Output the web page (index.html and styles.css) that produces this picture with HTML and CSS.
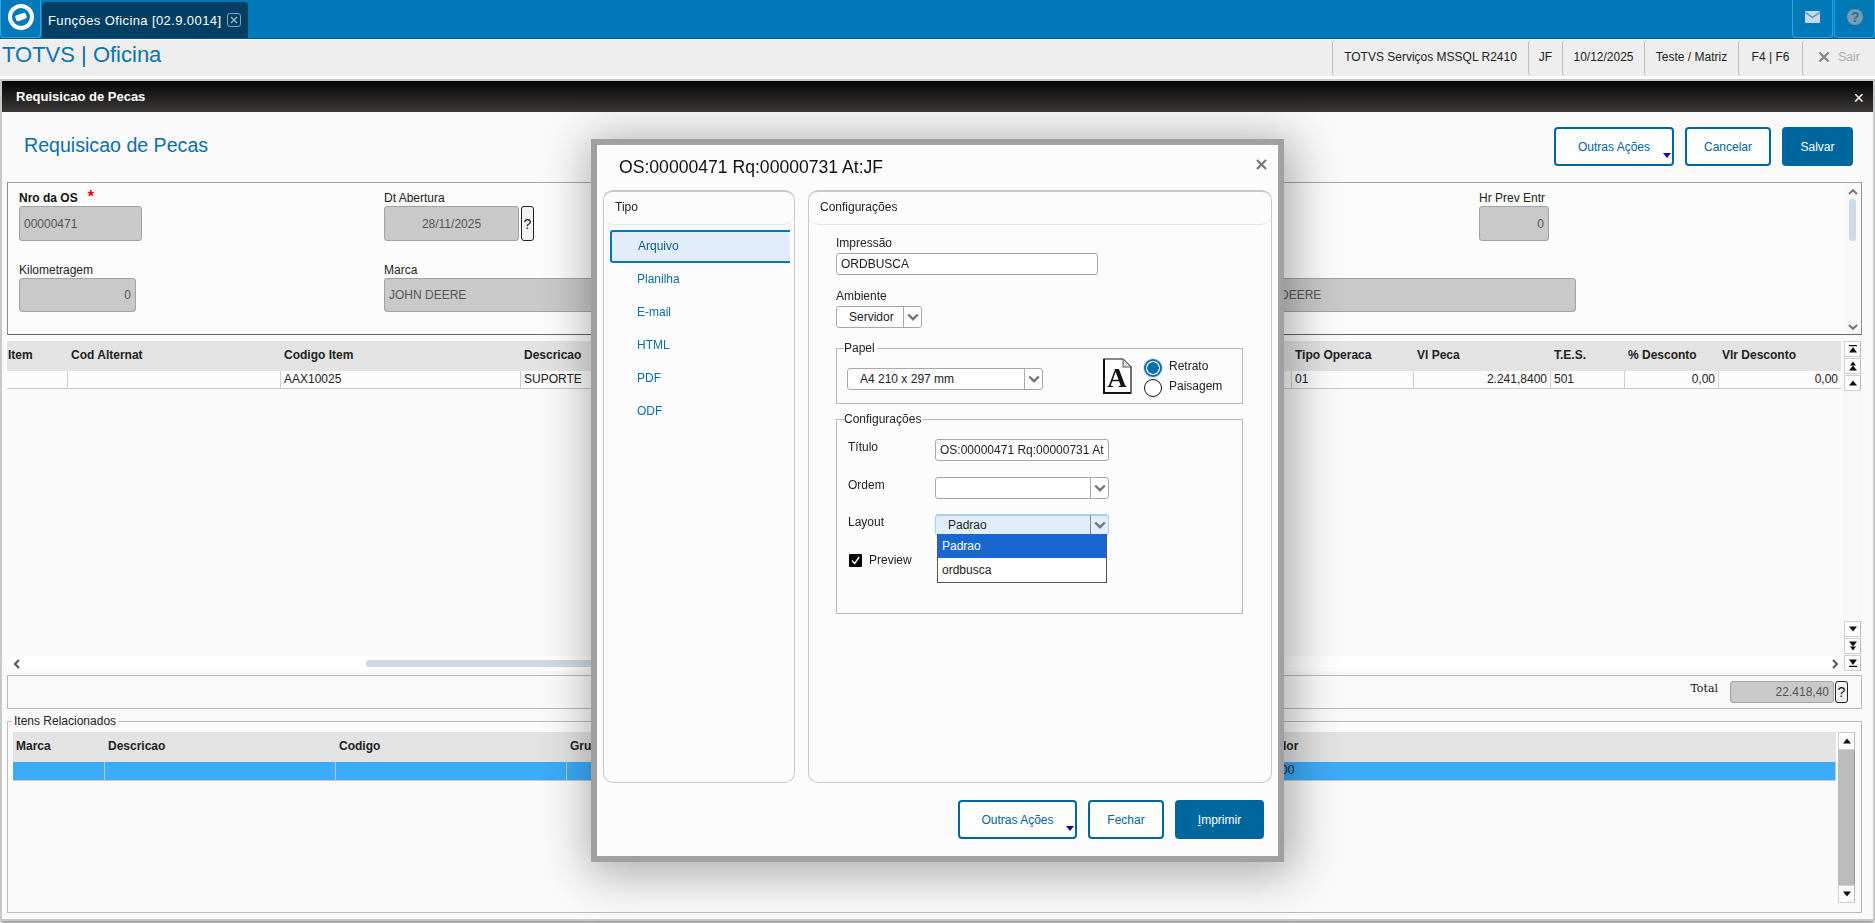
FILE: index.html
```html
<!DOCTYPE html>
<html lang="pt-BR">
<head>
<meta charset="utf-8">
<title>TOTVS | Oficina</title>
<link rel="stylesheet" href="styles.css">
</head>
<body>
<svg class="defs" width="0" height="0" aria-hidden="true">
  <symbol id="chev" viewBox="0 0 12 8"><path d="M1.2 1.5 6 6.2l4.8-4.7" fill="none" stroke="#777" stroke-width="2.4"/></symbol>
  <symbol id="up" viewBox="0 0 10 10"><path d="M5 2.5 9 7.5H1z" fill="#111"/></symbol>
  <symbol id="down" viewBox="0 0 10 10"><path d="M5 7.5 1 2.5h8z" fill="#111"/></symbol>
  <symbol id="upfast" viewBox="0 0 10 10"><path d="M5 0.5 8 4.5H2zM5 4.5 9 9.5H1z" fill="#111"/></symbol>
  <symbol id="downfast" viewBox="0 0 10 10"><path d="M5 9.5 2 5.5h6zM5 5.5 1 .5h8z" fill="#111"/></symbol>
  <symbol id="top" viewBox="0 0 10 10"><path d="M1 1h8v1.2H1zM5 3 9 8.5H1z" fill="#111"/></symbol>
  <symbol id="bottom" viewBox="0 0 10 10"><path d="M1 7.8h8V9H1zM5 7 1 1.5h8z" fill="#111"/></symbol>
</svg>

<header class="topbar">
  <div class="tile logo-tile">
    <svg width="28" height="28" viewBox="0 0 28 28"><circle cx="14" cy="14" r="11" fill="none" stroke="#fff" stroke-width="4"/><rect x="8.500" y="11" width="11" height="6" rx="1.500" fill="#fff" transform="rotate(-20 14 14)"/></svg>
  </div>
  <div class="tab">
    <span>Funções Oficina [02.9.0014]</span>
    <svg class="tab-close" width="14" height="14" viewBox="0 0 14 14"><rect x=".5" y=".5" width="13" height="13" rx="2.500" fill="none" stroke="#8aa3b5"/><path d="M4 4l6 6M10 4l-6 6" stroke="#9db4c4" stroke-width="1.400"/></svg>
  </div>
  <div class="spacer"></div>
  <div class="tile">
    <svg width="15" height="12" viewBox="0 0 15 12"><rect width="15" height="12" rx="1" fill="#c5d9e6"/><path d="M.5 1.500 7.500 6.500l7-5" fill="none" stroke="#3f8fc0" stroke-width="1.300"/></svg>
  </div>
  <div class="tile">
    <svg width="16" height="16" viewBox="0 0 16 16"><circle cx="8" cy="8" r="8" fill="#7f9aab"/><text x="8" y="12.500" text-anchor="middle" class="help-mark">?</text></svg>
  </div>
</header>

<div class="statusbar">
  <div class="brand">TOTVS | Oficina</div>
  <div class="cell c1">TOTVS Serviços MSSQL R2410</div>
  <div class="cell c2">JF</div>
  <div class="cell c3">10/12/2025</div>
  <div class="cell c4">Teste / Matriz</div>
  <div class="cell c5">F4 | F6</div>
  <div class="cell c6 sair">
    <svg width="12" height="12" viewBox="0 0 12 12"><path d="M1.500 1.500l9 9M10.500 1.500l-9 9" stroke="#888" stroke-width="2.400"/></svg>
    <span>Sair</span>
  </div>
</div>

<main class="window">
  <div class="win-title"><span>Requisicao de Pecas</span><span class="win-x">×</span></div>
  <div class="win-body">
    <div class="page-head">
      <h2 class="page-title">Requisicao de Pecas</h2>
      <div class="actions">
        <button class="btn w-more"><span>Outras Ações</span><i class="caret"></i></button>
        <button class="btn w-cancel">Cancelar</button>
        <button class="btn primary w-save">Salvar</button>
      </div>
    </div>

    <section class="form-panel">
      <div class="form-grid">
        <div class="field f-os">
          <label class="lbl strong">Nro da OS<b class="req">*</b></label>
          <div class="input w-os">00000471</div>
        </div>
        <div class="field f-dt">
          <label class="lbl">Dt Abertura</label>
          <div class="with-help"><div class="input center w-dt">28/11/2025</div><div class="help">?</div></div>
        </div>
        <div class="field f-hr">
          <label class="lbl">Hr Prev Entr</label>
          <div class="input right w-hr">0</div>
        </div>
        <div class="field f-km">
          <label class="lbl">Kilometragem</label>
          <div class="input right w-km">0</div>
        </div>
        <div class="field f-marca">
          <label class="lbl">Marca</label>
          <div class="input w-marca">JOHN DEERE</div>
        </div>
        <div class="field f-marca2">
          <label class="lbl">&nbsp;</label>
          <div class="input w-marca2">JOHN DEERE</div>
        </div>
      </div>
      <div class="vscroll">
        <svg class="sa" width="10" height="8"><use href="#chev" transform="rotate(180 5 4)"/></svg>
        <div class="vthumb"></div>
        <div class="spacer"></div>
        <svg class="sa" width="10" height="8"><use href="#chev"/></svg>
      </div>
    </section>

    <section class="grid-area">
      <div class="grid-main">
        <div class="tbl top-cols head">
          <div>Item</div><div>Cod Alternat</div><div>Codigo Item</div><div>Descricao</div><div>Tipo Operaca</div><div>Vl Peca</div><div>T.E.S.</div><div>% Desconto</div><div>Vlr Desconto</div>
        </div>
        <div class="tbl top-cols row">
          <div></div><div></div><div>AAX10025</div><div>SUPORTE</div><div>01</div><div class="r">2.241,8400</div><div>501</div><div class="r">0,00</div><div class="r">0,00</div>
        </div>
        <div class="spacer"></div>
        <div class="hscroll">
          <svg width="8" height="10" viewBox="0 0 8 10"><path d="M6 1 2 5l4 4" fill="none" stroke="#555" stroke-width="2"/></svg>
          <div class="hthumb"></div>
          <svg width="8" height="10" viewBox="0 0 8 10"><path d="M2 1l4 4-4 4" fill="none" stroke="#555" stroke-width="2"/></svg>
        </div>
      </div>
      <div class="side-btns">
        <div class="sb-group">
          <div class="sb"><svg width="10" height="10"><use href="#top"/></svg></div>
          <div class="sb"><svg width="10" height="10"><use href="#upfast"/></svg></div>
          <div class="sb"><svg width="10" height="10"><use href="#up"/></svg></div>
        </div>
        <div class="sb-group">
          <div class="sb"><svg width="10" height="10"><use href="#down"/></svg></div>
          <div class="sb"><svg width="10" height="10"><use href="#downfast"/></svg></div>
          <div class="sb"><svg width="10" height="10"><use href="#bottom"/></svg></div>
        </div>
      </div>
    </section>

    <section class="total-panel">
      <span class="total-lbl">Total</span>
      <div class="with-help tight"><div class="input right w-total">22.418,40</div><div class="help small">?</div></div>
    </section>

    <fieldset class="related">
      <legend>Itens Relacionados</legend>
      <div class="rel-wrap">
        <div class="rel-main">
          <div class="tbl rel-cols head">
            <div>Marca</div><div>Descricao</div><div>Codigo</div><div>Grupo</div><div>Valor</div>
          </div>
          <div class="tbl rel-cols row selected">
            <div></div><div></div><div></div><div></div><div class="val">0,00</div>
          </div>
        </div>
        <div class="rel-scroll">
          <div class="sb tall"><svg width="10" height="10"><use href="#up"/></svg></div>
          <div class="track"></div>
          <div class="sb tall"><svg width="10" height="10"><use href="#down"/></svg></div>
        </div>
      </div>
    </fieldset>
  </div>
</main>

<div class="modal">
  <div class="m-head">
    <div class="m-title">OS:00000471 Rq:00000731 At:JF</div>
    <svg class="m-x" width="11" height="11" viewBox="0 0 11 11"><path d="M1 1l9 9M10 1l-9 9" stroke="#777" stroke-width="2.200"/></svg>
  </div>
  <div class="m-body">
    <div class="m-panel m-left">
      <div class="m-phead">Tipo</div>
      <ul class="m-list">
        <li class="active">Arquivo</li>
        <li>Planilha</li>
        <li>E-mail</li>
        <li>HTML</li>
        <li>PDF</li>
        <li>ODF</li>
      </ul>
    </div>
    <div class="m-panel m-right">
      <div class="m-phead">Configurações</div>
      <div class="m-form">
        <label class="lbl dark">Impressão</label>
        <div class="tinput w-imp">ORDBUSCA</div>
        <label class="lbl dark mt">Ambiente</label>
        <div class="select w-amb"><span class="sv ind">Servidor</span><span class="sarrow"><svg width="12" height="8"><use href="#chev"/></svg></span></div>

        <fieldset class="box papel">
          <legend>Papel</legend>
          <div class="papel-row">
            <div class="select w-a4"><span class="sv ind">A4 210 x 297 mm</span><span class="sarrow"><svg width="12" height="8"><use href="#chev"/></svg></span></div>
            <svg class="docicon" width="29" height="36" viewBox="0 0 29 36"><path d="M1 1h19l8 8v26H1z" fill="#fff" stroke="#111" stroke-width="1.200"/><path d="M1 1v34h27" fill="none" stroke="#111" stroke-width="2"/><path d="M20 1v8h8z" fill="#ddd" stroke="#555"/><text x="14" y="29" text-anchor="middle" class="doc-a">A</text></svg>
            <div class="radios">
              <div class="radio-row"><span class="radio on"></span><span class="radio-text">Retrato</span></div>
              <div class="radio-row"><span class="radio"></span><span class="radio-text">Paisagem</span></div>
            </div>
          </div>
        </fieldset>

        <fieldset class="box config">
          <legend>Configurações</legend>
          <div class="cf-row"><span class="cf-lbl">Título</span><div class="tinput w-tit">OS:00000471 Rq:00000731 At</div></div>
          <div class="cf-row"><span class="cf-lbl">Ordem</span><div class="select w-ord"><span class="sv"></span><span class="sarrow"><svg width="12" height="8"><use href="#chev"/></svg></span></div></div>
          <div class="cf-row layout-row"><span class="cf-lbl">Layout</span>
            <div class="select focus w-lay"><span class="sv ind">Padrao</span><span class="sarrow"><svg width="12" height="8"><use href="#chev"/></svg></span>
              <div class="dropdown"><div class="opt sel">Padrao</div><div class="opt">ordbusca</div></div>
            </div>
          </div>
          <div class="check-row">
            <svg width="13" height="13" viewBox="0 0 13 13"><rect width="13" height="13" rx="1" fill="#000"/><path d="M3 6.500l2.600 3L10.200 3" fill="none" stroke="#fff" stroke-width="1.400"/></svg>
            <span>Preview</span>
          </div>
        </fieldset>
      </div>
    </div>
  </div>
  <div class="m-foot">
    <button class="btn m-more"><span>Outras Ações</span><i class="caret"></i></button>
    <button class="btn m-close">Fechar</button>
    <button class="btn primary m-print"><u>I</u>mprimir</button>
  </div>
</div>
</body>
</html>
```

FILE: styles.css
```css
* { box-sizing: border-box; }
html, body { height: 100%; }
body {
  margin: 0;
  width: 1875px;
  height: 923px;
  overflow: hidden;
  background: #fff;
  font-family: "Liberation Sans", Arial, sans-serif;
  font-size: 12px;
  color: #222;
  display: flex;
  flex-direction: column;
}
.defs { position: absolute; }
.spacer { flex: 1; }

/* top bar */
.topbar {
  height: 39px;
  flex: none;
  background: #0079b8;
  border-bottom: 1px solid #025a8a;
  display: flex;
  align-items: stretch;
}
.tile {
  width: 41px;
  border: 1px solid #2f9fe0;
  border-top: 0;
  border-radius: 0 0 4px 4px;
  display: flex;
  align-items: center;
  justify-content: center;
  margin-right: 1px;
  padding-bottom: 3px;
}
.logo-tile { background: #0079b8; }
.tile:last-child { margin-right: 0; }
.tab {
  width: 206px;
  margin-top: 2px;
  background: #003f63;
  border-radius: 4px 4px 0 0;
  color: #fff;
  font-size: 13px;
  letter-spacing: .4px;
  display: flex;
  align-items: center;
  padding-left: 6px;
  gap: 6px;
}
.help-mark { font: bold 14px "Liberation Sans", Arial, sans-serif; fill: #0079b8; }

/* status bar */
.statusbar {
  height: 36px;
  flex: none;
  background: #eee;
  margin-top: 1px;
  display: flex;
  align-items: stretch;
}
.brand {
  flex: 1;
  font-size: 22px;
  color: #0a74ad;
  padding-left: 2px;
  line-height: 29px;
}
.cell {
  border-left: 1px solid #bdbdbd;
  border-radius: 4px 0 0 4px;
  display: flex;
  align-items: center;
  justify-content: center;
  font-size: 12px;
  color: #222;
  padding-bottom: 3px;
}
.c1 { width: 196px; }
.c2 { width: 34px; }
.c3 { width: 82px; }
.c4 { width: 94px; }
.c5 { width: 64px; }
.c6 { width: 73px; }
.sair { gap: 8px; color: #aaa; }

/* main window */
.window {
  flex: none;
  margin: 5px 2px 0;
  height: 838px;
  display: flex;
  flex-direction: column;
  background: #fafafa;
  box-shadow: 0 0 0 2px #c9c9c9, 0 3px 3px 1px #8e8e8e;
}
.win-title {
  height: 31px;
  flex: none;
  background: linear-gradient(#050505, #3b3a38);
  color: #fff;
  font-weight: bold;
  font-size: 13px;
  padding: 0 9px 0 14px;
  display: flex;
  align-items: center;
  justify-content: space-between;
}
.win-x { font-size: 18px; font-weight: normal; line-height: 1; margin-top: 2px; }
.win-body { flex: 1; padding: 0 11px 0 5px; display: flex; flex-direction: column; }
.page-head {
  height: 70px;
  flex: none;
  display: flex;
  justify-content: space-between;
  align-items: flex-start;
}
.page-title {
  margin: 21px 0 0 17px;
  font-size: 19.6px;
  font-weight: normal;
  color: #0a6ea8;
  line-height: 24px;
}
.actions { display: flex; gap: 11px; margin: 15px 9px 0 0; }

.btn {
  position: relative;
  height: 39px;
  border: 2px solid #00669e;
  border-radius: 4px;
  background: #fdfdfd;
  color: #00669e;
  font: 12px "Liberation Sans", Arial, sans-serif;
  padding: 0;
}
.btn.primary { background: #00669e; color: #fff; }
.btn u { text-decoration: underline; }
.w-more { width: 120px; }
.w-cancel { width: 86px; }
.w-save { width: 71px; }
.caret {
  position: absolute;
  right: 1px;
  bottom: 6px;
  border-left: 4px solid transparent;
  border-right: 4px solid transparent;
  border-top: 5px solid #16089c;
}

/* form panel */
.form-panel {
  height: 153px;
  flex: none;
  border: 1px solid #8d8d8d;
  border-color: #a7a7a7 #8d8d8d #666;
  display: flex;
  background: #fcfcfc;
}
.form-grid {
  flex: 1;
  display: grid;
  grid-template-columns: 365px 1095px 1fr;
  grid-template-rows: 72px 1fr;
  padding: 8px 0 0 11px;
  min-width: 0;
}
.f-hr { grid-column: 3; }
.f-km { grid-row: 2; grid-column: 1; }
.f-marca { grid-row: 2; grid-column: 2; }
.f-marca2 { grid-row: 2; grid-column: 2 / 4; margin-left: 855px; }
.f-dt { grid-column: 2; }
.field { display: flex; flex-direction: column; }
.lbl { display: block; line-height: 14px; height: 15px; color: #222; }
.lbl.strong { font-weight: bold; color: #111; }
.req { color: #e00; font-size: 16px; margin-left: 10px; line-height: 10px; }
.input {
  background: #c9c9c9;
  border: 1px solid #a3a3a3;
  border-radius: 3px;
  color: #555;
  display: flex;
  align-items: center;
  padding: 0 4px;
  height: 35px;
}
.input.right { justify-content: flex-end; }
.input.center { justify-content: center; }
.w-os { width: 123px; }
.w-dt { width: 135px; }
.w-hr { width: 70px; }
.w-km { width: 117px; height: 34px; }
.w-marca { width: 500px; height: 34px; }
.w-marca2 { width: 337px; height: 34px; }
.with-help { display: flex; gap: 2px; }
.with-help.tight { gap: 1px; }
.help {
  width: 13px;
  border: 1px solid #222;
  border-radius: 3px;
  background: #f2f2f2;
  display: flex;
  align-items: center;
  justify-content: center;
  font-size: 14px;
  color: #111;
}
.vscroll {
  width: 15px;
  margin-right: 1px;
  background: #f8f8f8;
  display: flex;
  flex-direction: column;
  align-items: center;
  padding: 5px 0 3px;
}
.vthumb { width: 7px; height: 42px; background: #d0dae4; border-radius: 3px; margin-top: 3px; }

/* grid */
.grid-area { height: 330px; flex: none; margin-top: 6px; display: flex; }
.grid-main { flex: 1; min-width: 0; display: flex; flex-direction: column; }
.tbl { display: grid; flex: none; }
.top-cols { grid-template-columns: 61px 213px 240px 771px 122px 137px 74px 94px 123px; }
.rel-cols { grid-template-columns: 92px 231px 231px 699px 1fr; }
.head { height: 30px; background: #e3e3e3; font-weight: bold; color: #222; align-items: center; }
.head > div { padding-left: 3px; padding-bottom: 2px; white-space: nowrap; overflow: hidden; }
.top-cols.head > div:first-child { padding-left: 1px; }
.row { height: 18px; border-bottom: 1px solid #c9c9c9; background: #fcfcfc; }
.row > div {
  border-right: 1px solid #d0d0d0;
  padding: 0 3px;
  line-height: 16px;
  white-space: nowrap;
  overflow: hidden;
}
.row > div.r { text-align: right; }
.row > div.val { padding-left: 5px; }
.selected { background: #3dabf8; height: 19px; }
.selected > div { border-right-color: #b9c6d0; }
.hscroll {
  height: 15px;
  flex: none;
  background: #fff;
  display: flex;
  align-items: center;
  justify-content: space-between;
  padding: 0 2px 0 6px;
  position: relative;
}
.hthumb { position: absolute; left: 359px; width: 800px; top: 4px; height: 7px; background: #d0dae4; border-radius: 3px; }
.side-btns { width: 21px; padding-left: 3px; display: flex; flex-direction: column; justify-content: space-between; background: #f8f8f8; }
.sb-group { display: flex; flex-direction: column; gap: 1px; }
.sb {
  height: 16px;
  width: 17px;
  background: #fcfcfc;
  border: 1px solid #d0d0d0;
  border-right-color: #bbb;
  display: flex;
  align-items: center;
  justify-content: center;
}

/* total */
.total-panel {
  height: 34px;
  flex: none;
  margin-top: 4px;
  border: 1px solid #bbb;
  display: flex;
  align-items: center;
  justify-content: flex-end;
  padding-right: 13px;
}
.total-lbl { font: 11px "DejaVu Serif", serif; margin-right: 12px; color: #111; margin-bottom: 7px; }
.w-total { width: 104px; height: 22px; }
.help.small { width: 13px; font-size: 14px; }

/* related */
.related {
  height: 199px;
  flex: none;
  margin: 5px 0 0;
  padding: 4px 6px 0 5px;
  border: 1px solid #bbb;
  min-width: 0;
}
.related legend { padding: 0 2px; margin-left: -1px; line-height: 14px; font-size: 12px; color: #222; }
.rel-wrap { display: flex; gap: 2px; }
.rel-main { flex: 1; min-width: 0; }
.rel-scroll { width: 17px; display: flex; flex-direction: column; height: 171px; }
.sb.tall { height: 18px; }
.track { flex: 1; background: #bcbcbc; border-right: 1px solid #999; }

/* modal */
.modal {
  position: fixed;
  left: 591px;
  top: 139px;
  width: 693px;
  height: 723px;
  border: 6px solid #a0a0a0;
  background: #fcfcfc;
  box-shadow: 4px 6px 45px 6px rgba(0, 0, 0, .32);
  display: flex;
  flex-direction: column;
}
.m-head { height: 45px; flex: none; display: flex; justify-content: space-between; align-items: center; padding: 0 11px 0 22px; }
.m-title { font-size: 17.6px; color: #111; margin-bottom: 1px; }
.m-x { margin-top: -6px; }
.m-body { height: 593px; flex: none; display: flex; gap: 13px; padding: 0 6px; }
.m-panel { border: 1px solid #c9c9c9; border-top-width: 2px; border-radius: 10px; }
.m-left { width: 192px; flex: none; }
.m-right { flex: 1; }
.m-phead {
  height: 33px;
  border-bottom: 1px solid #e4e4e4;
  border-radius: 10px;
  padding-left: 11px;
  line-height: 31px;
  color: #222;
}
.m-list { list-style: none; margin: 5px 0 0 6px; padding: 0; }
.m-list li { height: 33px; line-height: 32px; color: #0b6fa6; padding-left: 27px; }
.m-list li.active {
  color: #0c5a86;
  background: #e1edfa;
  border: 2px solid #007ab8;
  border-right: 0;
  border-radius: 3px 0 0 3px;
  line-height: 29px;
  padding-left: 26px;
  width: 180px;
}
.m-form { padding: 11px 28px 0 27px; }
.lbl.dark { margin-bottom: 2px; }
.lbl.mt { margin-top: 14px; }
.tinput {
  height: 22px;
  border: 1px solid #a8a8a8;
  border-radius: 3px;
  background: #fdfdfd;
  line-height: 20px;
  padding: 0 4px;
  white-space: nowrap;
  overflow: hidden;
}
.w-imp { width: 262px; }
.w-tit { width: 174px; }
.select {
  position: relative;
  height: 22px;
  border: 1px solid #a8a8a8;
  border-radius: 3px;
  background: #fdfdfd;
  display: flex;
  align-items: stretch;
}
.sv { flex: 1; line-height: 20px; }
.sv.ind { padding-left: 12px; }
.sarrow { width: 18px; border-left: 1px solid #a8a8a8; display: flex; align-items: center; justify-content: center; }
.w-amb { width: 86px; }
.w-a4 { width: 196px; flex: none; }
.w-ord { width: 174px; }
.w-lay { width: 174px; height: 22px; }
.focus { background: #e1edfa; border: 1px solid #a8cdf5; box-shadow: inset 0 1px 0 #a8cdf5; }
.focus .sarrow { border-left-color: #888; }
.dropdown {
  position: absolute;
  left: 1px;
  top: 19px;
  width: 170px;
  border: 1px solid #555;
  border-top: 0;
  background: #fff;
  z-index: 2;
}
.opt { height: 24px; line-height: 24px; padding-left: 4px; }
.opt.sel { background: #1a67d2; color: #fff; }

.box { border: 1px solid #b9b9b9; margin: 0; padding: 0; min-width: 0; }
.box legend { padding: 0 2px 0 0; line-height: 14px; color: #222; }
.papel { margin-top: 13px; height: 63px; padding: 13px 10px 0; }
.papel legend { margin-left: -3px; }
.config legend { margin-left: -4px; }
.papel-row { display: flex; align-items: flex-start; }
.docicon { margin: -10px 0 0 60px; flex: none; }
.doc-a { font: bold 27px "Liberation Serif", serif; fill: #111; }
.radios { margin-left: 12px; margin-top: -10px; display: flex; flex-direction: column; gap: 1px; }
.radio-row { display: flex; align-items: center; gap: 7px; height: 19px; }
.radio-text { margin-bottom: 3px; }
.radio { width: 18px; height: 18px; border-radius: 50%; border: 1px solid #111; background: #fff; flex: none; }
.radio.on { border: 2px solid #0a6ea8; background: radial-gradient(circle, #0a6ea8 0 5.500px, #fff 6px); box-shadow: 0 0 0 1px #cfe3f3; }
.config { margin-top: 8px; height: 202px; padding: 13px 0 0 11px; }
.cf-row { display: flex; align-items: flex-start; height: 22px; margin-bottom: 16px; }
.cf-lbl { width: 87px; line-height: 14px; margin-top: 1px; flex: none; }
.layout-row { margin-bottom: 0; margin-top: -1px; }
.check-row { display: flex; align-items: center; gap: 7px; margin: 17px 0 0 1px; }
.m-foot { flex: 1; display: flex; justify-content: flex-end; gap: 11px; padding: 17px 14px 0 0; }
.m-more { width: 119px; }
.m-close { width: 76px; }
.m-print { width: 89px; }
```
